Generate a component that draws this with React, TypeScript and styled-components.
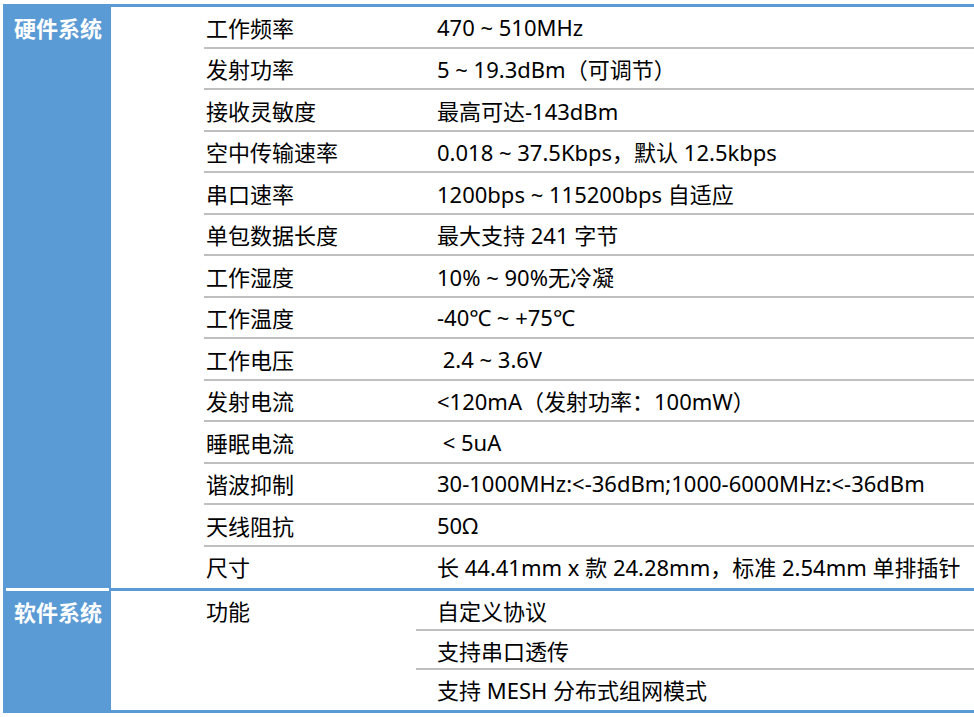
import styled, { createGlobalStyle } from 'styled-components'

const GlobalStyle = createGlobalStyle`
  html, body {
    margin: 0;
    padding: 0;
    background: #ffffff;
  }
  body {
    font-family: "Noto Sans", "Noto Sans CJK SC", sans-serif;
    color: #000000;
  }
`

const BLUE = '#5b9bd5'
const GREY = '#bfbfbf'

const hardware: [string, string][] = [
  ['工作频率', '470 ~ 510MHz'],
  ['发射功率', '5 ~ 19.3dBm（可调节）'],
  ['接收灵敏度', '最高可达-143dBm'],
  ['空中传输速率', '0.018 ~ 37.5Kbps，默认 12.5kbps'],
  ['串口速率', '1200bps ~ 115200bps 自适应'],
  ['单包数据长度', '最大支持 241 字节'],
  ['工作湿度', '10% ~ 90%无冷凝'],
  ['工作温度', '-40℃ ~ +75℃'],
  ['工作电压', '\u00a02.4 ~ 3.6V'],
  ['发射电流', '<120mA（发射功率：100mW）'],
  ['睡眠电流', '\u00a0< 5uA'],
  ['谐波抑制', '30-1000MHz:<-36dBm;1000-6000MHz:<-36dBm'],
  ['天线阻抗', '50Ω'],
  ['尺寸', '长 44.41mm x 款 24.28mm，标准 2.54mm 单排插针'],
]

const software = ['自定义协议', '支持串口透传', '支持 MESH 分布式组网模式']

export default function App() {
  return (
    <>
      <GlobalStyle />
      <Table>
        <Section>
          <Category rows={hardware.length}>
            <CategoryTitle>硬件系统</CategoryTitle>
            <CategoryDivider />
          </Category>
          {hardware.map(([label, value], i) => {
            const last = i === hardware.length - 1
            return (
              <Row key={label}>
                <Label h={41.5} line={!last}>{label}</Label>
                <Value h={41.5} line={!last}>{value}</Value>
              </Row>
            )
          })}
        </Section>
        <Section>
          <Category rows={software.length} last>
            <CategoryTitle>软件系统</CategoryTitle>
          </Category>
          {software.map((value, i) => {
            const last = i === software.length - 1
            return (
              <Row key={value}>
                <Label h={39.7} line={false}>{i === 0 ? '功能' : ''}</Label>
                <Value h={39.7} line={!last}>{value}</Value>
              </Row>
            )
          })}
        </Section>
      </Table>
    </>
  )
}

const Table = styled.div`
  margin: 4px 0 0 3px;
  width: 971px;
  border-top: 3px solid ${BLUE};
`

const Section = styled.div`
  display: grid;
  grid-template-columns: 108px 305px 1fr;
  border-bottom: 3px solid ${BLUE};
`

const Category = styled.div<{ rows: number; last?: boolean }>`
  grid-column: 1;
  grid-row: 1 / span ${p => p.rows};
  background: ${BLUE};
  display: flex;
  flex-direction: column;
  margin-bottom: ${p => (p.last ? '0' : '-3px')};
`

const CategoryTitle = styled.div`
  padding: 5px 0 0 11px;
  color: #ffffff;
  font-family: "Noto Sans CJK SC", sans-serif;
  font-weight: 700;
  font-size: 22px;
  line-height: 30px;
`

const CategoryDivider = styled.div`
  margin: auto 2px 0 3px;
  height: 3px;
  background: #ffffff;
`

const Row = styled.div`
  display: contents;
`

const Cell = styled.div<{ h: number; line: boolean }>`
  box-sizing: border-box;
  height: ${p => p.h}px;
  display: flex;
  align-items: center;
  font-size: 22px;
  white-space: nowrap;
  border-bottom: 2px solid ${p => (p.line ? GREY : 'transparent')};
`

const Label = styled(Cell)`
  grid-column: 2;
  margin-left: 93px;
  padding-left: 2px;
  font-family: "Noto Sans CJK SC", sans-serif;
`

const Value = styled(Cell)`
  grid-column: 3;
  padding-left: 21px;
`
